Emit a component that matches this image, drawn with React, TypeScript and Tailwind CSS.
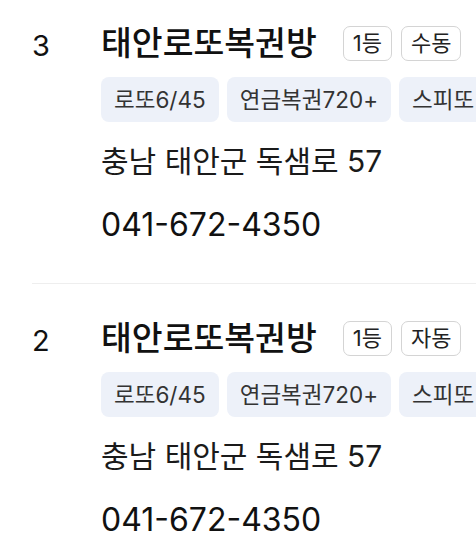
import React from "react";

type Item = { rank: number; name: string; badges: string[]; tags: string[]; address: string; phone: string };

const items: Item[] = [
  { rank: 3, name: "태안로또복권방", badges: ["1등", "수동"], tags: ["로또6/45", "연금복권720+", "스피또"], address: "충남 태안군 독샘로 57", phone: "041-672-4350" },
  { rank: 2, name: "태안로또복권방", badges: ["1등", "자동"], tags: ["로또6/45", "연금복권720+", "스피또"], address: "충남 태안군 독샘로 57", phone: "041-672-4350" },
];

const font = { fontFamily: 'Inter, "Noto Sans CJK KR", sans-serif' };

export default function App() {
  return (
    <div className="w-[476px] h-[554px] overflow-hidden bg-white" style={font}>
      <div className="pl-[32px]">
        {items.map((it, i) => (
          <div
            key={i}
            className={
              i === 0
                ? "flex pt-[23px] pb-[37px] border-b border-[#eeeeee]"
                : "flex pt-[34px] pb-[37px]"
            }
          >
            <div className="w-[69px] shrink-0 text-[29px] leading-[40px] text-[#111111] pt-[3px]">{it.rank}</div>
            <div className="flex flex-col min-w-0">
              <div className="flex items-center h-[40px] whitespace-nowrap">
                <span className="text-[33.5px] font-medium text-[#111111] leading-[40px]">{it.name}</span>
                <div className="flex gap-[9px] ml-[26px]">
                  {it.badges.map((b) => (
                    <span
                      key={b}
                      className="border border-[#d4d4d4] rounded-[7px] px-[9px] h-[35px] flex items-center text-[22px] text-[#222222]"
                    >
                      {b}
                    </span>
                  ))}
                </div>
              </div>
              <div className="flex gap-[8px] mt-[14px] whitespace-nowrap">
                {it.tags.map((t) => (
                  <span
                    key={t}
                    className="shrink-0 bg-[#edf1f9] rounded-[8px] px-[13px] h-[45px] flex items-center text-[22.5px] text-[#333333]"
                  >
                    {t}
                  </span>
                ))}
              </div>
              <div className="mt-[20px] text-[30px] leading-[38px] text-[#1a1a1a] whitespace-nowrap">{it.address}</div>
              <div className="mt-[24px] text-[32px] leading-[42px] text-[#111111] whitespace-nowrap">{it.phone}</div>
            </div>
          </div>
        ))}
      </div>
    </div>
  );
}
